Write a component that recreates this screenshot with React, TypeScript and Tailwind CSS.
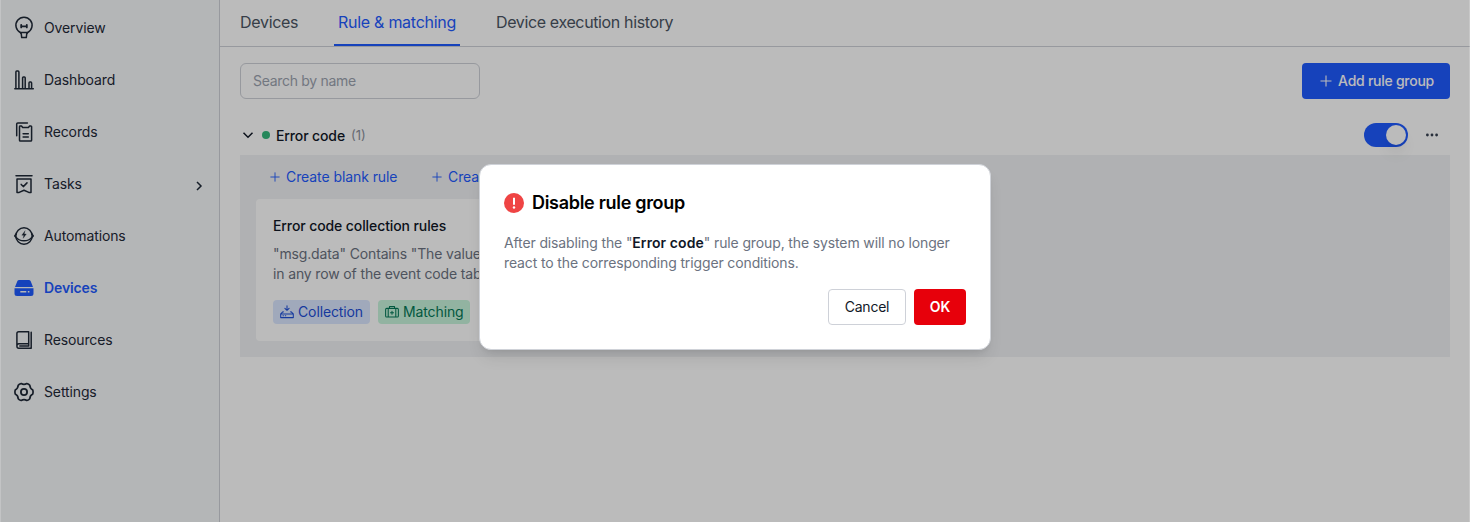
import type { ReactNode } from 'react';

type IconProps = { children: ReactNode; className?: string };

function Stroke({ children, className = 'size-5' }: IconProps) {
  return (
    <svg
      viewBox="0 0 20 20"
      className={`${className} shrink-0 overflow-visible`}
      fill="none"
      stroke="currentColor"
      strokeWidth="1.5"
      strokeLinecap="round"
      strokeLinejoin="round"
    >
      {children}
    </svg>
  );
}

const OverviewIcon = (
  <Stroke>
    <path d="M6.6 14.6A8.1 8.1 0 1 1 13.4 14.6" />
    <path d="M6.3 14.6h7.4l-1 1.4-.4 3.6H7.7L7.3 16z" />
    <path d="M7.2 6.8v2.6M12.8 6.8v2.6M7.2 8.4h5.6" strokeWidth="1.8" />
  </Stroke>
);

const DashboardIcon = (
  <Stroke>
    <path d="M.8 18.8h18.5M1.9 18.5V1.9q0-.9.9-.9h1.2q.9 0 .9.9v16.6M8.6 18.5V7.8q0-.8.8-.8h1q.8 0 .8.8v10.7M15 18.5v-5.6q0-.8.8-.8h1q.8 0 .8.8v5.6" />
  </Stroke>
);

const RecordsIcon = (
  <Stroke>
    <path d="M2.7 13.7V2q0-1.1 1.1-1.1h9.6" />
    <path d="M7.5 4H6.2q-.7 0-.7.7v13.5q0 .9.9.9h10.3q.9 0 .9-.9V4.7q0-.7-.7-.7h-1.3l-1.2 1.5H8.7z" />
    <path d="M9.1 11.7h5.2M9.1 15h5.2" />
  </Stroke>
);

const TasksIcon = (
  <Stroke>
    <path d="M2 1.7h16M3 5.1h14v13.3h-2.2L10 16.3l-4.8 2.1H3z" />
    <path d="m7.2 10.4 2.1 2.2 3.7-3.7" />
  </Stroke>
);

const AutomationsIcon = (
  <Stroke>
    <circle cx="10" cy="10" r="8.2" />
    <path d="M2.2 7.8.7 10l1.7 1.6q2.6 3.2 7.6 3.2t7.6-3.2L19.3 10l-1.5-2.2" />
    <path d="m10.9 5-3.1 4.2h2l-.6 3.1L12.3 8h-2z" fill="currentColor" strokeWidth=".3" />
  </Stroke>
);

const DevicesIcon = (
  <svg viewBox="0 0 20 20" className="size-5 shrink-0" fill="currentColor">
    <path d="M5.2 2h9.6q1.3 0 1.8 1.1L19 9H1l2.4-5.9Q3.9 2 5.2 2Z" />
    <path
      fillRule="evenodd"
      d="M.5 10.2h19v5.3q0 2.5-2.5 2.5H3Q.5 18 .5 15.5ZM6.3 13v1.4h6V13ZM13.8 13v1.4h1.6V13Z"
    />
  </svg>
);

const ResourcesIcon = (
  <Stroke>
    <path d="M2.9 15.8V3.6q0-1.9 1.8-1.9h10v12H4.8q-1.9 0-1.9 2.3t1.9 2.3h12.4V2.3M5.8 16h9M14.7 13.7V16" />
  </Stroke>
);

const SettingsIcon = (
  <Stroke>
    <path
      d="M7.2 1.5Q10 3.2 12.8 1.5q2 .6 3 1.8Q16 6.6 18.8 7.9q.6 2.1 0 4.2Q16 13.4 15.8 16.7q-1 1.2-3 1.8Q10 16.8 7.2 18.5q-2-.6-3-1.8Q4 13.4 1.2 12.1q-.6-2.1 0-4.2Q4 6.6 4.2 3.3q1-1.2 3-1.8Z"
      strokeWidth="1.7"
    />
    <circle cx="10" cy="10" r="3.1" strokeWidth="1.8" />
  </Stroke>
);

const navigation = [
  { label: 'Overview', icon: OverviewIcon },
  { label: 'Dashboard', icon: DashboardIcon },
  { label: 'Records', icon: RecordsIcon },
  { label: 'Tasks', icon: TasksIcon, expandable: true },
  { label: 'Automations', icon: AutomationsIcon },
  { label: 'Devices', icon: DevicesIcon, active: true },
  { label: 'Resources', icon: ResourcesIcon },
  { label: 'Settings', icon: SettingsIcon },
];

function Plus({ className = 'size-3' }: { className?: string }) {
  return (
    <svg viewBox="0 0 12 12" className={`${className} shrink-0`} stroke="currentColor" strokeWidth="1.1">
      <path d="M6 .5v11M.5 6h11" />
    </svg>
  );
}

function Sidebar() {
  return (
    <aside className="flex w-[220px] shrink-0 flex-col gap-3 border-r border-[#ced1d8] bg-[#f6f8fa] pt-2">
      {navigation.map((item) => (
        <a
          key={item.label}
          className={
            item.active
              ? 'flex h-10 items-center gap-2.5 px-3.5 font-semibold text-[#1f5bff]'
              : 'flex h-10 items-center gap-2.5 px-3.5 text-[#1f2937]'
          }
        >
          {item.icon}
          <span>{item.label}</span>
          {item.expandable && (
            <svg viewBox="0 0 12 12" className="mt-1 ml-auto size-3" fill="none" stroke="currentColor" strokeWidth="1.5">
              <path d="m4 2 4 4-4 4" />
            </svg>
          )}
        </a>
      ))}
    </aside>
  );
}

function Tabs() {
  return (
    <nav className="flex h-[47px] shrink-0 gap-8 border-b border-[#ced1d8] px-4 text-base tracking-[-0.37px] text-[#4b5563]">
      <a className="flex h-[46px] w-[66px] items-center px-1 pb-0.5 tracking-[-0.3px]">Devices</a>
      <a className="flex h-[46px] w-[126px] items-center border-b-2 border-[#1f5bff] px-1 tracking-[-0.27px] whitespace-nowrap text-[#1f5bff]">
        Rule &amp; matching
      </a>
      <a className="flex h-[46px] items-center px-1 pb-0.5">Device execution history</a>
    </nav>
  );
}

function RuleCard() {
  return (
    <article className="mt-3 h-[142px] w-[386px] rounded bg-white px-[17px] pt-[17px]">
      <h3 className="leading-5 font-medium tracking-[-0.1px] text-[#111827]">Error code collection rules</h3>
      <p className="mt-2 leading-5 tracking-[-0.14px] whitespace-nowrap text-[#6b7280]">
        "msg.data" Contains "The value
        <br />
        in any row of the event code tab
      </p>
      <div className="mt-4 flex gap-2">
        <span className="flex h-6 w-[97px] items-center gap-1 rounded bg-[#dbe7ff] pl-[7px] text-[#1d4ed8]">
          <Stroke className="size-3.5">
            <path d="M10 1v6M7 4.8l3 2.8 3-2.8M4.8 9.8H4l-3 3V18h18v-5.2l-3-3h-.8M1 12.8h18M4.3 15.4h.6M7.6 15.4h.6" />
          </Stroke>
          Collection
        </span>
        <span className="flex h-6 w-[92px] items-center gap-1 rounded bg-[#c7f5dc] pl-[7px] text-[#047857]">
          <Stroke className="size-3.5">
            <path d="M6.4 4.8V2h7.2v2.8M2.4 4.8h15.2q1.5 0 1.5 1.5v9.4q0 1.5-1.5 1.5H2.4Q.9 17.2.9 15.7V6.3q0-1.5 1.5-1.5ZM4.6 4.8v12.4M15.4 4.8v12.4M10 8.8v4.4M7.8 11h4.4" />
          </Stroke>
          Matching
        </span>
      </div>
    </article>
  );
}

function RuleGroup() {
  return (
    <section>
      <header className="flex h-10 items-center text-[#111827]">
        <svg viewBox="0 0 16 16" className="size-4" fill="none" stroke="currentColor" strokeWidth="1.5">
          <path d="m3.5 5.8 4.5 4.5 4.5-4.5" />
        </svg>
        <span className="ml-1.5 size-2 rounded-full bg-[#34b97d]" />
        <span className="mt-0.5 ml-1.5 font-medium">Error code</span>
        <span className="ml-1.5 text-[13px] tracking-normal text-[#8b909c]">(1)</span>
        <button className="ml-auto flex h-6 w-11 items-center justify-end rounded-full bg-[#1f5bff] p-0.5">
          <span className="size-5 rounded-full bg-white shadow-lg" />
        </button>
        <svg viewBox="0 0 12 4" className="mr-3 ml-[18px] h-1 w-3" fill="#374151">
          <circle cx="1.4" cy="2" r="1.4" />
          <circle cx="6" cy="2" r="1.4" />
          <circle cx="10.6" cy="2" r="1.4" />
        </svg>
      </header>
      <div className="h-[202px] bg-[#f0f2f4] px-4 pt-3">
        <div className="flex h-5 items-center gap-9 pl-3.5 text-[#1f5bff]">
          <button className="flex w-[126px] items-center gap-1.5 tracking-[-0.08px] whitespace-nowrap">
            <Plus className="size-2.5" />
            Create blank rule
          </button>
          <button className="flex items-center gap-1.5 tracking-[-0.08px]">
            <Plus className="size-2.5" />
            Crea
          </button>
        </div>
        <RuleCard />
      </div>
    </section>
  );
}

function DisableDialog() {
  return (
    <div className="absolute inset-0 flex items-start justify-center border-x border-white/20 bg-black/[0.265] pt-[164px]">
      <div
        role="dialog"
        className="h-[186px] w-[512px] rounded-xl border border-[#cfd2d8] bg-white px-6 pt-6 shadow-lg"
      >
        <h2 className="flex h-7 items-center gap-2 text-lg font-semibold tracking-[-0.3px] text-black">
          <svg viewBox="0 0 20 20" className="size-5">
            <circle cx="10" cy="10" r="10" fill="#ef4444" />
            <path d="M10 4.8v6.9" stroke="#fff" strokeWidth="2" />
            <circle cx="10" cy="14.5" r="1.2" fill="#fff" />
          </svg>
          Disable rule group
        </h2>
        <p className="mt-4 leading-5 tracking-[-0.13px] text-[#6b7280]">
          After disabling the "
          <strong className="font-semibold tracking-[0.08px] text-[#111827]">Error code</strong>" rule group, the system
          will no longer
          <br />
          react to the corresponding trigger conditions.
        </p>
        <div className="mt-4 flex justify-end gap-2">
          <button className="h-9 w-[78px] rounded border border-[#ced1d8] tracking-[-0.25px] text-[#111827]">
            Cancel
          </button>
          <button className="h-9 w-[52px] rounded bg-[#e7000b] font-semibold text-white">OK</button>
        </div>
      </div>
    </div>
  );
}

export default function App() {
  return (
    <div className="relative flex h-[522px] w-full overflow-hidden bg-white font-['Inter',sans-serif] text-sm tracking-[-0.12px]">
      <Sidebar />
      <main className="flex min-w-0 flex-1 flex-col">
        <Tabs />
        <div className="px-5 pt-4">
          <div className="mb-4 flex items-center justify-between">
            <input
              placeholder="Search by name"
              className="h-9 w-60 rounded-md border border-[#ced1d8] px-3 pb-0.5 tracking-[-0.3px] placeholder:text-[#9ca3af]"
            />
            <button className="flex h-9 w-[148px] items-center justify-end gap-1.5 rounded bg-[#1f5bff] pr-4 font-medium tracking-[-0.26px] text-white">
              <Plus />
              Add rule group
            </button>
          </div>
          <RuleGroup />
        </div>
      </main>
      <DisableDialog />
    </div>
  );
}
